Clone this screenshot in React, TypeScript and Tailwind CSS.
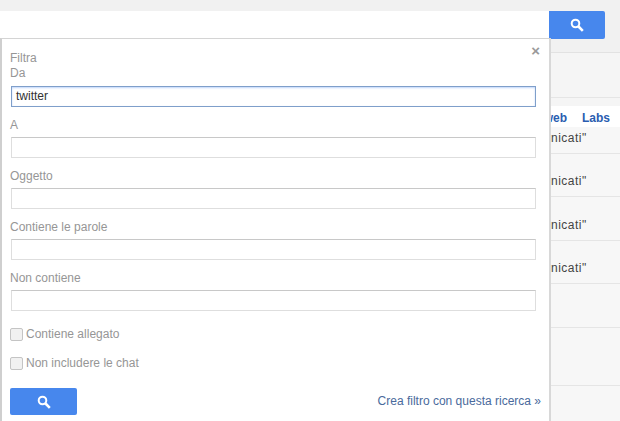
const fieldLabels = ['A', 'Oggetto', 'Contiene le parole', 'Non contiene'];
const rowClasses = ['h-[43px] pt-[20px]', 'h-[44px] pt-[21px]', 'h-[43px] pt-[20px]'];

function SearchIcon() {
  return (
    <svg width="14" height="14" viewBox="0 0 14 14" fill="none" stroke="white">
      <circle cx="5.5" cy="5.5" r="3.8" strokeWidth="2" />
      <path d="M8.5 8.5 L12.8 12.8" strokeWidth="2.6" />
    </svg>
  );
}

function Field({ label }: { label: string }) {
  return (
    <div className="mt-[9px]">
      <div className="h-[21px] leading-[18px] text-[#969696]">{label}</div>
      <div className="h-[21px] ml-[1px] border border-[#dedede] border-t-[#c8c8c8] bg-white" />
    </div>
  );
}

function Check({ label, className }: { label: string; className: string }) {
  return (
    <div className={`flex items-center gap-[3px] h-[16px] ${className}`}>
      <span className="w-[13px] h-[13px] rounded-[2px] border border-[#c4c4c4] bg-[#f1f1f1]" />
      <span className="text-[#969696]">{label}</span>
    </div>
  );
}

export default function App() {
  return (
    <div className="relative w-[620px] h-[421px] overflow-hidden bg-[#f7f7f7] text-[12px] font-['Liberation_Sans',Arial,sans-serif]">
      {/* page behind the panel */}
      <div className="h-[53px] bg-[#f1f1f1] border-b border-[#e2e2e2] pt-[11px]">
        <div className="flex">
          <div className="w-[549px] h-[27px] bg-white" />
          <div className="w-[56px] h-[28px] rounded-r-[2px] bg-[#4787ed] flex items-center justify-center">
            <SearchIcon />
          </div>
        </div>
      </div>
      <div className="h-[45px] bg-[#f5f5f5] border-b border-[#e5e5e5]" />
      <div className="h-[8px] bg-[#f5f5f5]" />
      <div className="flex justify-end gap-[15px] h-[21px] pr-[10px] pt-[3px] bg-white font-bold text-[#2a5db0]">
        <span>web</span>
        <span>Labs</span>
      </div>
      <div className="h-[27px] border-b border-[#e5e5e5] pl-[551px] pt-[4px] leading-[14px] tracking-[0.5px] text-[#444]">nicati"</div>
      {rowClasses.map((row, i) => (
        <div key={i} className={`${row} border-b border-[#e5e5e5] pl-[551px] leading-[14px] tracking-[0.5px] text-[#444]`}>
          nicati"
        </div>
      ))}
      <div className="h-[44px] border-b border-[#e5e5e5]" />
      <div className="h-[58px] border-b border-[#e5e5e5]" />

      {/* filter panel */}
      <div className="absolute left-0 top-[38px] w-[551px] h-[383px] bg-white border-l-2 border-l-[#cfcfcf] border-r-2 border-r-[#d8d8d8] border-t border-t-[#d4d4d4] pl-[8px] pr-[13px] pt-[12px]">
        <span className="absolute right-[9px] top-[4px] text-[15px] leading-[15px] font-bold text-[#9a9a9a]">×</span>
        <div className="h-[15px] leading-[15px] text-[#969696]">Filtra</div>
        <div className="h-[19px] leading-[15px] text-[#969696]">Da</div>
        <div className="h-[21px] mt-[1px] border border-[#7f9fca] shadow-[inset_0_1px_2px_rgba(74,138,244,0.35)] bg-white pl-[4px] leading-[19px] text-[#333] ml-[1px]">
          twitter
        </div>
        {fieldLabels.map(label => (
          <Field key={label} label={label} />
        ))}
        <Check label="Contiene allegato" className="mt-[15px]" />
        <Check label="Non includere le chat" className="mt-[13px]" />
        <div className="flex items-center justify-between mt-[17px]">
          <div className="w-[67px] h-[27px] rounded-[2px] bg-[#4787ed] flex items-center justify-center">
            <SearchIcon />
          </div>
          <span className="text-[#4a6a9c] mb-[1px] -mr-[5px]">Crea filtro con questa ricerca »</span>
        </div>
      </div>
    </div>
  );
}
